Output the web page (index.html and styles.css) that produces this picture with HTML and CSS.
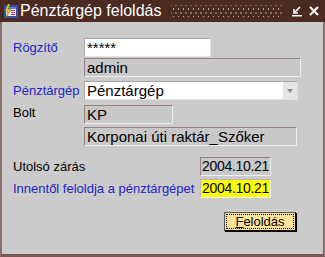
FILE: index.html
```html
<!DOCTYPE html>
<html lang="hu">
<head>
  <meta charset="UTF-8">
  <title>Pénztárgép feloldás</title>
  <link rel="stylesheet" href="styles.css">
</head>
<body>
  <div class="window">
    <div class="titlebar">
      <svg class="app-icon" width="16" height="16" viewBox="0 0 16 16">
        <rect x="1" y="2" width="14" height="13" fill="#3050b0"/>
        <rect x="3" y="4" width="10" height="9" fill="#f0f0f0"/>
        <rect x="3" y="4" width="10" height="2" fill="#6080d0"/>
        <rect x="8" y="7" width="4" height="1" fill="#c02040"/>
        <rect x="8" y="9" width="4" height="1" fill="#a040a0"/>
        <rect x="8" y="11" width="4" height="1" fill="#c02040"/>
        <path d="M5 1 L2 8 L5 8 L3 15 L8 6 L5 6 L7 1 Z" fill="#f0d020" stroke="#806000" stroke-width="0.5"/>
      </svg>
      <span class="title">Pénztárgép feloldás</span>
      <div class="dots"></div>
      <div class="controls">
        <svg width="12" height="12" viewBox="0 0 12 12">
          <path d="M9 2 L4 7 M3 4 L3 8 L7 8" stroke="#fff" stroke-width="1.6" fill="none"/>
          <rect x="1" y="10" width="10" height="1.5" fill="#fff"/>
        </svg>
        <svg width="12" height="12" viewBox="0 0 12 12">
          <path d="M2 2 L10 10 M10 2 L2 10" stroke="#fff" stroke-width="2" fill="none"/>
        </svg>
      </div>
    </div>
    <div class="content">
      <div class="form">
        <label class="lbl req">Rögzítő</label>
        <div class="field input short">*****</div>

        <span></span>
        <div class="field ro wide">admin</div>

        <label class="lbl req sel-lbl">Pénztárgép</label>
        <div class="field input select">
          <span>Pénztárgép</span>
          <span class="arrow"></span>
        </div>

        <label class="lbl bolt">Bolt</label>
        <div class="field ro kp">KP</div>

        <span></span>
        <div class="field ro store">Korponai úti raktár_Szőker</div>
      </div>

      <div class="dates">
        <span class="lbl">Utolsó zárás</span>
        <div class="field ro date">2004.10.21</div>
        <span class="lbl req">Innentől feloldja a pénztárgépet</span>
        <div class="field date hl">2004.10.21</div>
      </div>

      <div class="actions">
        <button class="btn"><u>F</u>eloldás</button>
      </div>
    </div>
  </div>
</body>
</html>
```

FILE: styles.css
```css
* { box-sizing: border-box; margin: 0; padding: 0; }
body {
  font-family: 'Liberation Sans', Arial, sans-serif;
  font-size: 13px;
  background: #cbcbcb;
}
.window {
  width: 325px;
  height: 257px;
  background: #cbcbcb;
  border-left: 2px solid #8c706a;
  border-right: 2px solid #8c706a;
  border-bottom: 3px solid #7a5a52;
  display: flex;
  flex-direction: column;
}
.titlebar {
  height: 22px;
  margin: 0 -2px;
  background: #4b2a22;
  display: flex;
  align-items: center;
  padding: 0 5px 0 3px;
  color: #fff;
}
.app-icon { flex: none; margin-right: 1px; }
.title {
  font-size: 16px;
  white-space: nowrap;
}
.dots {
  flex: 1;
  height: 12px;
  margin: 0 9px 0 10px;
  background-image:
    radial-gradient(circle, #b8a49a 0.6px, transparent 0.9px),
    radial-gradient(circle, #b8a49a 0.6px, transparent 0.9px);
  background-size: 5px 8px, 5px 8px;
  background-position: 0 0, 2.5px 4px;
}
.controls {
  display: flex;
  gap: 5px;
  align-items: center;
}
.content {
  flex: 1;
  padding: 16px 0 0 11px;
}
.form {
  display: grid;
  grid-template-columns: 71px 1fr;
  row-gap: 1px;
  align-items: center;
}
.lbl { color: #000; white-space: nowrap; }
.lbl.req { color: #2424c4; }
.field {
  height: 19px;
  line-height: 17px;
  padding: 0 2px;
  font-size: 15px;
  white-space: nowrap;
}
.input {
  background: #fff;
  border: 1px solid #a8a8a8;
  border-right-color: #e0e0e0;
  border-bottom-color: #e0e0e0;
}
.ro {
  background: #c8c8c8;
  border: 1px solid #968080;
  border-right-color: #f0f0f0;
  border-bottom-color: #f0f0f0;
}
.short { width: 127px; }
.wide { width: 217px; }
.select {
  width: 214px;
  margin-top: 3px;
  display: flex;
  justify-content: space-between;
  align-items: center;
  padding-right: 0;
}
.sel-lbl { margin-top: 3px; }
.arrow {
  width: 14px;
  height: 17px;
  background: #e4e4e4;
  position: relative;
}
.arrow::after {
  content: "";
  position: absolute;
  left: 4px;
  top: 7px;
  border-left: 3px solid transparent;
  border-right: 3px solid transparent;
  border-top: 4px solid #8a8a8a;
}
.bolt { margin-top: 4px; align-self: start; }
.kp { width: 89px; margin-top: 4px; }
.store { width: 213px; margin-top: 2px; }
.dates {
  display: grid;
  grid-template-columns: 187px 71px;
  row-gap: 3px;
  align-items: center;
  margin-top: 11px;
}
.date {
  width: 71px;
  padding: 0 1px;
  font-size: 14px;
  letter-spacing: -0.3px;
}
.hl {
  background: #ffff00;
  border: 1px solid #b8b8b8;
  border-right-color: #f0f0f0;
  border-bottom-color: #f0f0f0;
}
.actions {
  display: flex;
  justify-content: flex-end;
  padding-right: 27px;
  margin-top: 14px;
}
.btn {
  width: 72px;
  height: 19px;
  font-family: 'Liberation Sans', Arial, sans-serif;
  font-size: 13px;
  background: #fde39a;
  border: 1px solid #000;
  border-top-color: #555;
  border-left-color: #555;
  outline: 1px dotted #000;
  outline-offset: -3px;
  box-shadow: 1px 1px 0 #000;
  color: #000;
}
```
